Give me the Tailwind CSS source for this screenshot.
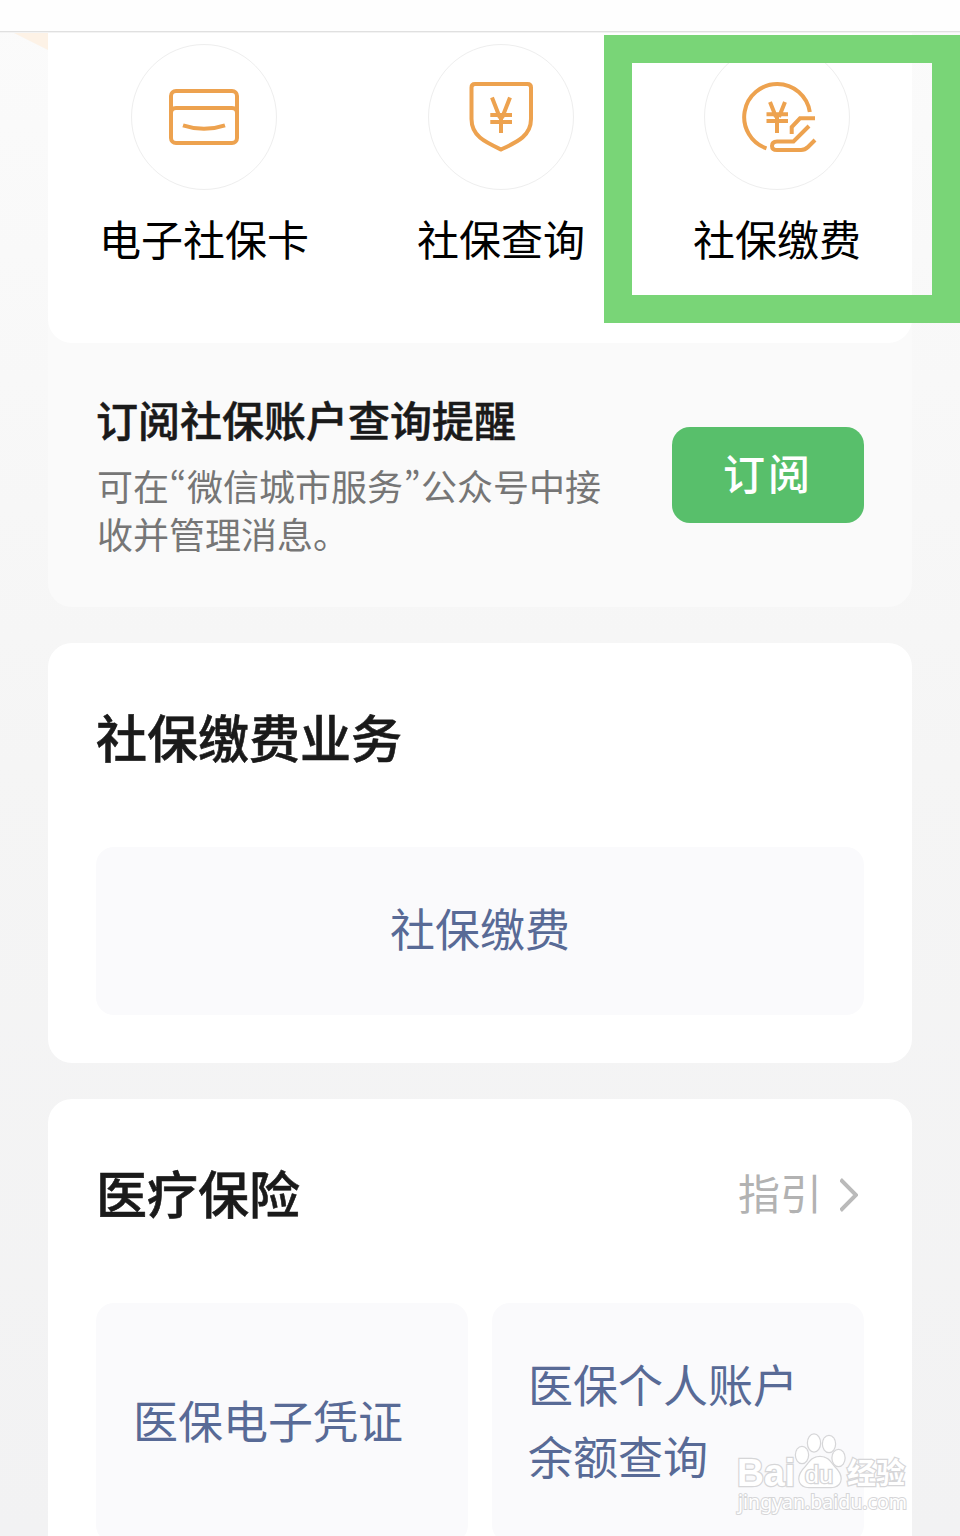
<!DOCTYPE html>
<html lang="zh-CN">

<head>
    <meta charset="UTF-8" />
    <meta name="viewport" content="width=device-width, initial-scale=1.0" />
    <title>社保</title>
    <script src="https://cdn.jsdelivr.net/npm/@tailwindcss/browser@4"></script>
</head>

<body class="relative h-[1536px] overflow-hidden bg-gradient-to-b from-[#fbfbfb] via-[#f5f5f5] to-[#f2f2f3] font-['Noto_Sans_CJK_SC',sans-serif] text-[#1a1a1a]">

    <header class="h-[33px] bg-[#fefefe] pt-[31px]">
        <div class="h-[2px] border-t border-[#e0e0e0] bg-[#f3f3f3]"></div>
    </header>

    <!-- Corner of the banner behind the cards -->
    <svg class="absolute left-0 top-[33px]" width="48" height="18" viewBox="0 0 48 18">
        <path d="M14 0H48V17Z" fill="#fdf2e6" />
    </svg>

    <main class="relative px-12">
        <section class="rounded-3xl bg-[#fafafa]">
            <div class="flex h-[310px] gap-[108px] rounded-b-3xl bg-white px-[51px] pt-[11px] text-[42px] leading-[60px] text-black">
                <a class="flex flex-col items-center gap-[18px] whitespace-nowrap">
                    <span class="flex size-[146px] items-center justify-center rounded-full border border-[#eeeeee]">
                        <svg width="90" height="90" viewBox="159 72 90 90" fill="none" stroke="#eda24f" stroke-width="4">
                            <rect x="171" y="91" width="66" height="52" rx="5" />
                            <path d="M171 113Q171 108 176 108H232Q237 108 237 113M183 125.300Q204 132.300 225 125.300" />
                        </svg>
                    </span>
                    <span>电子社保卡</span>
                </a>
                <a class="flex flex-col items-center gap-[18px] whitespace-nowrap">
                    <span class="flex size-[146px] items-center justify-center rounded-full border border-[#eeeeee]">
                        <svg width="90" height="90" viewBox="456 72 90 90" fill="none" stroke="#eda24f" stroke-width="4">
                            <path d="M475 84H527.500Q531 84 531 87.500V119C531 136 517 142 501 149.500C485 142 471.500 136 471.500 119V87.500Q471.500 84 475 84Z" />
                            <path d="M492 97.500L500 118M510 97.500L502 118M490.300 115H512M490.300 122H512M501 115V133" />
                        </svg>
                    </span>
                    <span>社保查询</span>
                </a>
                <a class="flex flex-col items-center gap-[18px] whitespace-nowrap">
                    <span class="flex size-[146px] items-center justify-center rounded-full border border-[#eeeeee]">
                        <svg width="90" height="90" viewBox="732 72 90 90" fill="none" stroke="#eda24f" stroke-width="4">
                            <path d="M809.800 112A33 33 0 1 0 766.500 148.300" />
                            <path d="M770 102L776 117M785 102L779 117M766.500 114.200H788M766.500 121H788M777 114V133" />
                            <path d="M815 118.300H800L791.700 127V134M809 126L793.500 141.500H777Q772 141.500 772 146Q772 150 777 150H801Q805 150 808 147L815 140" />
                        </svg>
                    </span>
                    <span>社保缴费</span>
                </a>
            </div>

            <div class="flex h-[264px] items-center justify-between px-12">
                <div class="pb-[5px]">
                    <h2 class="mb-3 text-[42px] font-medium leading-[60px] [-webkit-text-stroke:0.5px]">订阅社保账户查询提醒</h2>
                    <p class="pl-px text-4xl leading-[48px] text-[#767676]">可在<span class="inline-block w-[18px] text-center leading-none [font-feature-settings:'pwid']">“</span>微信城市服务<span class="inline-block w-[18px] text-center leading-none [font-feature-settings:'pwid']">”</span>公众号中接<br>收并管理消息。</p>
                </div>
                <button class="h-24 w-48 rounded-[18px] bg-[#58bf6b] pb-2 text-[42px] font-medium tracking-[3px] text-white">订阅</button>
            </div>
        </section>

        <section class="mt-9 h-[420px] rounded-3xl bg-white px-12 pt-[57px]">
            <h2 class="text-[51px] font-medium leading-[72px] [-webkit-text-stroke:0.6px]">社保缴费业务</h2>
            <a class="mt-[75px] flex h-[168px] items-center justify-center rounded-[18px] bg-[#fafafc] pb-1.5 text-[45px] text-[#586a96]">社保缴费</a>
        </section>

        <section class="mt-9 h-[437px] overflow-hidden rounded-t-3xl bg-white px-12 pt-[57px]">
            <div class="flex items-center justify-between">
                <h2 class="text-[51px] font-medium leading-[72px] [-webkit-text-stroke:0.6px]">医疗保险</h2>
                <a class="flex items-center text-[42px] leading-[60px] text-[#b2b2b2]">指引
                    <svg class="ml-[18px] mr-[6px] mt-1.5" width="18" height="36" viewBox="0 0 18 36" fill="none" stroke="#bababa" stroke-width="4">
                        <path d="M0.500 2.500L16 18L0.500 33.500" />
                    </svg>
                </a>
            </div>
            <div class="mt-[75px] grid h-[240px] grid-cols-2 gap-6 text-[45px] leading-[72px] text-[#586a96]">
                <a class="flex items-center rounded-[18px] bg-[#fafafc] pb-1.5 pl-[37px]">医保电子凭证</a>
                <a class="flex items-center rounded-[18px] bg-[#fafafc] px-9 pb-1.5">医保个人账户<br>余额查询</a>
            </div>
        </section>
    </main>

    <!-- Highlight frame, runs past the right edge -->
    <div class="absolute left-[604px] top-[35px] h-[288px] w-[356px] border-[28px] border-[#79d577]"></div>

    <!-- Watermark -->
    <svg class="absolute left-[730px] top-[1426px]" width="190" height="100" viewBox="730 1426 190 100" fill="#ffffff" stroke="#d6d6d8" stroke-width="2.500" paint-order="stroke">
        <text x="737" y="1486" font-family="Liberation Sans, sans-serif" font-weight="700" font-size="38" textLength="58" lengthAdjust="spacingAndGlyphs">Bai</text>
        <g stroke-width="2.500">
            <ellipse cx="802" cy="1455" rx="6" ry="8" />
            <ellipse cx="814" cy="1443" rx="6" ry="8.500" />
            <ellipse cx="829" cy="1444" rx="6" ry="8" />
            <ellipse cx="838.500" cy="1458" rx="6" ry="8" />
            <path d="M820 1457C829 1457 831 1464 837 1470C844 1479 840 1487 831 1487H809C800 1487 796 1479 803 1470C809 1464 811 1457 820 1457Z" />
        </g>
        <text x="805" y="1483" font-family="Liberation Sans, sans-serif" font-size="23" textLength="28" lengthAdjust="spacingAndGlyphs">du</text>
        <text x="847" y="1484" font-family="Noto Sans CJK SC, sans-serif" font-weight="700" font-size="29" textLength="58">经验</text>
        <text x="738" y="1509" font-family="Noto Sans, sans-serif" font-size="19" stroke-width="2" textLength="169" lengthAdjust="spacingAndGlyphs">jingyan.baidu.com</text>
    </svg>

</body>

</html>
